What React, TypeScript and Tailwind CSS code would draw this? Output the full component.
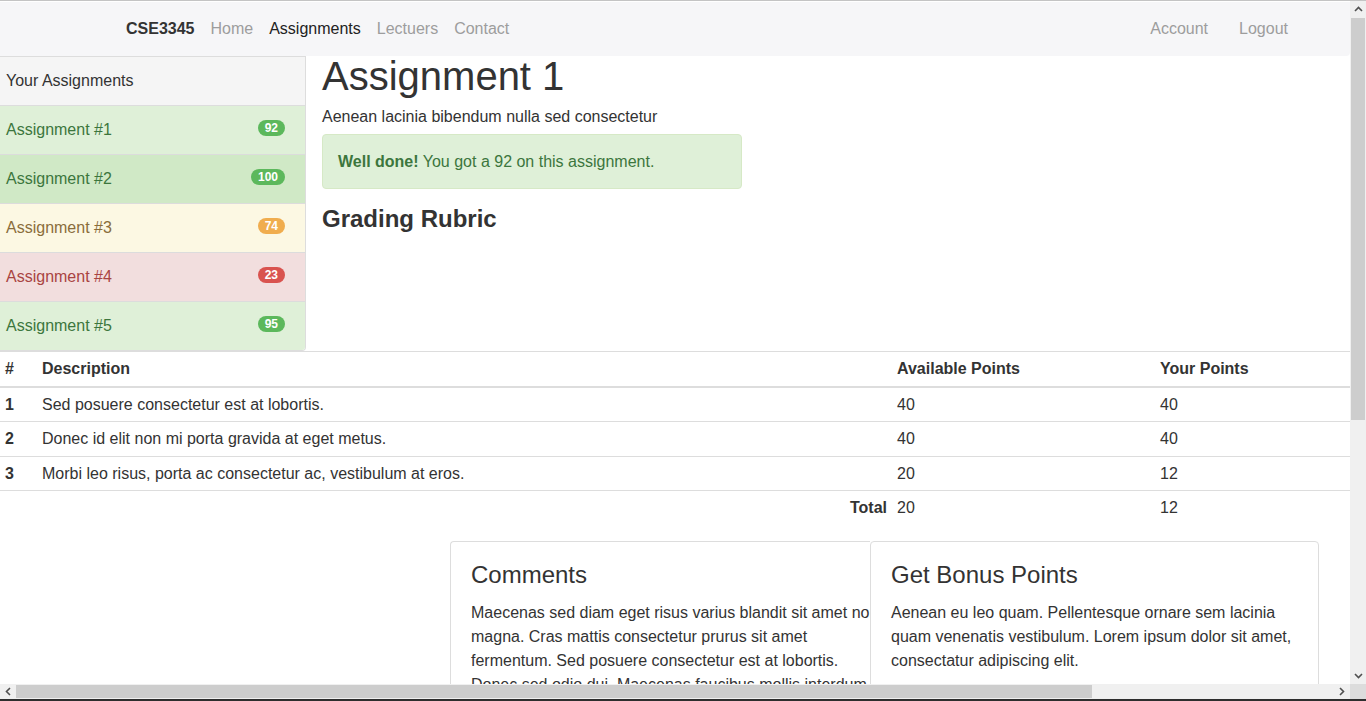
import React from 'react'

type Item = {
    name: string
    score: number
    row: string
    badge: string
}

const ITEMS: Item[] = [
    { name: 'Assignment #1', score: 92, row: 'bg-[#dff0d8] text-[#3c763d]', badge: 'bg-[#5cb85c]' },
    { name: 'Assignment #2', score: 100, row: 'bg-[#d0e9c6] text-[#3c763d]', badge: 'bg-[#5cb85c]' },
    { name: 'Assignment #3', score: 74, row: 'bg-[#fcf8e3] text-[#8a6d3b]', badge: 'bg-[#f0ad4e]' },
    { name: 'Assignment #4', score: 23, row: 'bg-[#f2dede] text-[#a94442]', badge: 'bg-[#d9534f]' },
    { name: 'Assignment #5', score: 95, row: 'bg-[#dff0d8] text-[#3c763d]', badge: 'bg-[#5cb85c]' }
]

const RUBRIC = [
    { n: '1', desc: 'Sed posuere consectetur est at lobortis.', avail: '40', yours: '40' },
    { n: '2', desc: 'Donec id elit non mi porta gravida at eget metus.', avail: '40', yours: '40' },
    { n: '3', desc: 'Morbi leo risus, porta ac consectetur ac, vestibulum at eros.', avail: '20', yours: '12' }
]

function Chevron({ dir }: { dir: 'up' | 'down' | 'left' | 'right' }) {
    // tiny scrollbar arrow
    const pts = {
        up: '1,6 4.5,2.5 8,6',
        down: '1,3 4.5,6.5 8,3',
        left: '6,1 2.5,4.5 6,8',
        right: '3,1 6.5,4.5 3,8'
    }[dir]
    return (
        <svg width="9" height="9" viewBox="0 0 9 9">
            <polyline points={pts} fill="none" stroke="#505050" strokeWidth="1.6" />
        </svg>
    )
}

function Navbar() {
    return (
        <nav className="mt-px h-[54px] flex items-center bg-[#f6f6f8] rounded-br-[4px] text-[16px]">
            <div className="flex items-center gap-4 pl-[126px]">
                <span className="font-bold text-[#333]">CSE3345</span>
                <span className="text-[#9d9d9d]">Home</span>
                <span className="text-[#222]">Assignments</span>
                <span className="text-[#9d9d9d]">Lectuers</span>
                <span className="text-[#9d9d9d]">Contact</span>
            </div>
            <div className="ml-auto flex items-center gap-[31px] pr-[62px] text-[#9d9d9d]">
                <span>Account</span>
                <span>Logout</span>
            </div>
        </nav>
    )
}

function Sidebar() {
    return (
        <aside className="w-[306px] shrink-0 border-t border-r border-b border-[#ddd] rounded-br-[4px] overflow-hidden text-[16px]">
            <div className="h-[49px] flex items-center px-[6px] bg-[#f5f5f5] text-[#333] border-b border-[#ddd]">
                Your Assignments
            </div>
            {ITEMS.map((it, i) => (
                <div
                    key={it.name}
                    className={[
                        'flex items-center justify-between pl-[6px] pr-[20px]',
                        i < ITEMS.length - 1 ? 'h-[49px] border-b border-[#dcdcdc]' : 'h-[48px]',
                        it.row
                    ].join(' ')}>
                    <span>{it.name}</span>
                    <span
                        className={[
                            'mb-1 px-[7px] py-[2px] rounded-[10px] text-[12px] leading-[12px] font-bold text-white',
                            it.badge
                        ].join(' ')}>
                        {it.score}
                    </span>
                </div>
            ))}
        </aside>
    )
}

function Rubric() {
    const cell = 'px-[5px] py-2 leading-[17.5px]'
    return (
        <table className="w-[1350px] table-fixed border-collapse text-[16px] text-[#333]">
            <colgroup>
                <col className="w-[37px]" />
                <col className="w-[855px]" />
                <col className="w-[263px]" />
                <col className="w-[195px]" />
            </colgroup>
            <thead>
                <tr className="border-t border-[#ddd] border-b-2 text-left">
                    <th className={cell}>#</th>
                    <th className={cell}>Description</th>
                    <th className={cell}>Available Points</th>
                    <th className={cell}>Your Points</th>
                </tr>
            </thead>
            <tbody>
                {RUBRIC.map((r) => (
                    <tr key={r.n} className="border-b border-[#ddd]">
                        <td className={cell + ' font-bold'}>{r.n}</td>
                        <td className={cell}>{r.desc}</td>
                        <td className={cell}>{r.avail}</td>
                        <td className={cell}>{r.yours}</td>
                    </tr>
                ))}
                <tr>
                    <td colSpan={2} className={cell + ' text-right font-bold'}>Total</td>
                    <td className={cell}>20</td>
                    <td className={cell}>12</td>
                </tr>
            </tbody>
        </table>
    )
}

export default function App() {
    return (
        <div
            className="w-[1366px] h-[701px] flex flex-col overflow-hidden bg-white"
            style={{ fontFamily: '"Liberation Sans", Arial, sans-serif' }}>
            <div className="h-px bg-[#c4c4c4] shrink-0" />
            <div className="flex-1 flex min-h-0">
                {/* page */}
                <div className="w-[1350px] overflow-hidden">
                    <Navbar />
                    <div className="flex">
                        <Sidebar />
                        <main className="ml-4 text-[#333]">
                            <h1 className="text-[40px] leading-[40px]">Assignment 1</h1>
                            <p className="mt-[10px] text-[16px] leading-[22px]">Aenean lacinia bibendum nulla sed consectetur</p>
                            <div className="mt-[6px] w-[420px] px-[15px] py-[15px] bg-[#dff0d8] border border-[#d6e9c6] rounded-[4px] text-[#3c763d] text-[16px] leading-[23px]">
                                <strong>Well done!</strong> You got a 92 on this assignment.
                            </div>
                            <h3 className="mt-[17px] text-[24px] leading-[26px] font-bold">Grading Rubric</h3>
                        </main>
                    </div>
                    <Rubric />
                    <div className="mt-[16px] pl-[450px] flex text-[#333]">
                        <div className="w-[420px] h-[200px] shrink-0 border border-r-0 border-[#ddd] rounded-l-[4px] overflow-hidden px-5 pt-[20px]">
                            <h3 className="text-[24px] leading-[26px]">Comments</h3>
                            <p className="mt-[13px] w-[420px] text-[16px] leading-[24px]">
                                Maecenas sed diam eget risus varius blandit sit amet non magna. Cras mattis consectetur prurus sit amet fermentum. Sed posuere consectetur est at lobortis.
                                <br />
                                Donec sed odio dui. Maecenas faucibus mollis interdum.
                            </p>
                        </div>
                        <div className="w-[449px] h-[200px] shrink-0 border border-[#ddd] rounded-[4px] px-5 pt-[20px]">
                            <h3 className="text-[24px] leading-[26px]">Get Bonus Points</h3>
                            <p className="mt-[13px] text-[16px] leading-[24px]">
                                Aenean eu leo quam. Pellentesque ornare sem lacinia quam venenatis vestibulum. Lorem ipsum dolor sit amet, consectatur adipiscing elit.
                            </p>
                        </div>
                    </div>
                </div>
                {/* vertical scrollbar */}
                <div className="w-[16px] flex flex-col bg-[#f0f0f0]">
                    <div className="h-[17px] flex items-center justify-center">
                        <Chevron dir="up" />
                    </div>
                    <div className="mx-[1px] h-[402px] bg-[#cdcdcd]" />
                    <div className="flex-1" />
                    <div className="h-[17px] flex items-center justify-center">
                        <Chevron dir="down" />
                    </div>
                </div>
            </div>
            {/* horizontal scrollbar */}
            <div className="h-[15px] shrink-0 flex bg-[#f0f0f0]">
                <div className="w-[16px] flex items-center justify-center">
                    <Chevron dir="left" />
                </div>
                <div className="w-[1076px] my-[1px] bg-[#cdcdcd]" />
                <div className="flex-1" />
                <div className="w-[17px] flex items-center justify-center">
                    <Chevron dir="right" />
                </div>
                <div className="w-[16px] bg-[#dcdcdc]" />
            </div>
            <div className="h-[2px] shrink-0 bg-[#2e2e2e]" />
        </div>
    )
}
